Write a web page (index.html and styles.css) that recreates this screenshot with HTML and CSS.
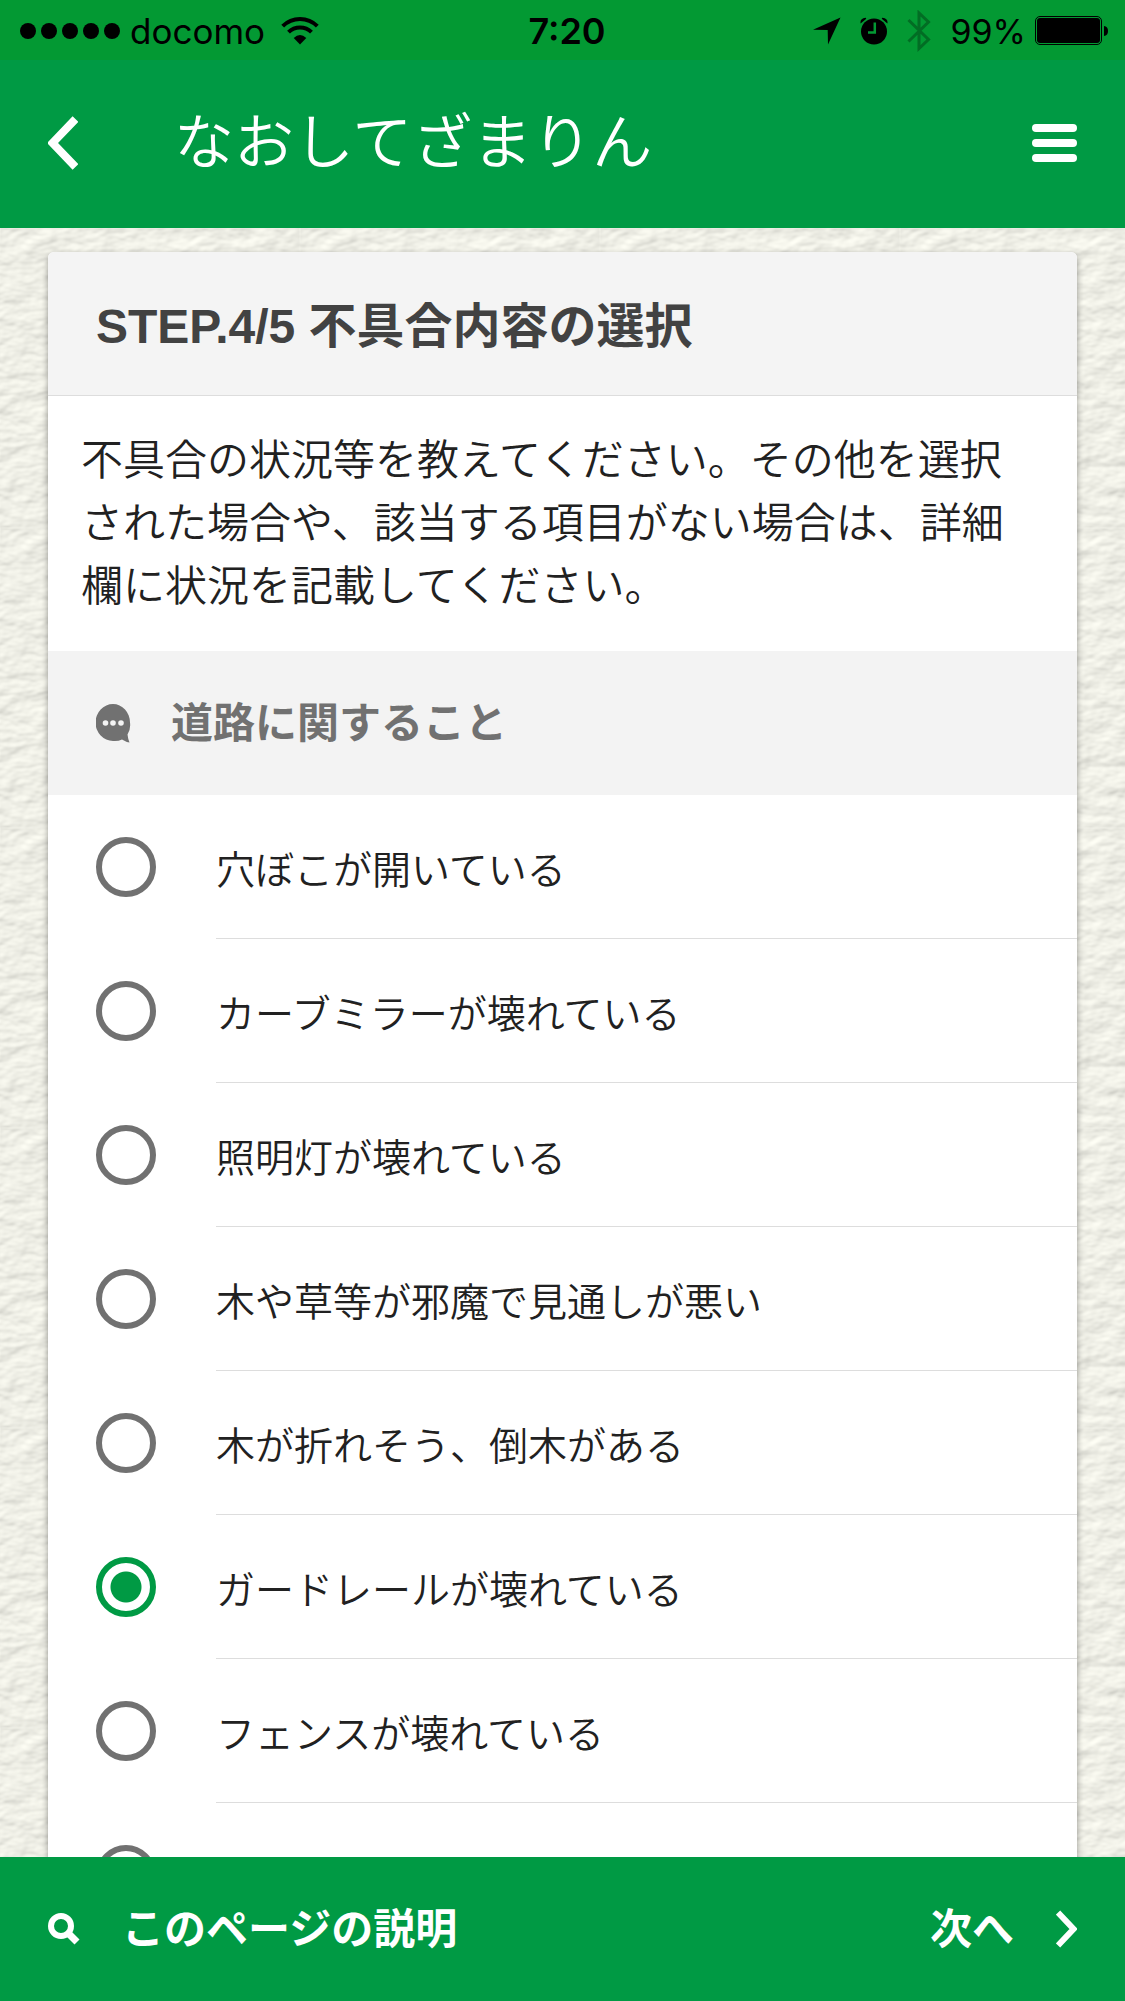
FILE: index.html
```
<!DOCTYPE html>
<html lang="ja">
<head>
    <meta charset="UTF-8">
    <meta name="viewport" content="width=device-width, initial-scale=1.0">
    <title>なおしてざまりん</title>
    <link rel="stylesheet" href="styles.css">
</head>
<body>

    <!-- Status Bar -->
    <div class="status-bar">
        <div class="status-left">
            <svg class="signal" width="100" height="16" viewBox="0 0 100 16">
                <circle cx="8" cy="8" r="8"/>
                <circle cx="29" cy="8" r="8"/>
                <circle cx="50" cy="8" r="8"/>
                <circle cx="71" cy="8" r="8"/>
                <circle cx="92" cy="8" r="8"/>
            </svg>
            <span class="carrier">docomo</span>
            <svg class="wifi" width="38" height="28" viewBox="0 0 38 28">
                <path d="M1.700 9.200A24.500 24.500 0 0 1 36.300 9.200M7.500 15.200A16.300 16.300 0 0 1 30.500 15.200" fill="none" stroke="#000" stroke-width="4"/>
                <path d="M19 27.500L12.700 21Q19 15 25.300 21Z"/>
            </svg>
        </div>
        <div class="clock">7:20</div>
        <div class="status-right">
            <svg width="28" height="28" viewBox="0 0 28 28">
                <path d="M27.500 0.500L0 12.700L14.700 13L15 27.500Z"/>
            </svg>
            <svg width="28" height="28" viewBox="0 0 28 28">
                <circle cx="14" cy="14.500" r="13"/>
                <path d="M0.600 6.500Q-0.300 1.500 5.500 0.800Q6.500 1.200 6 2ZM27.400 6.500Q28.300 1.500 22.500 0.800Q21.500 1.200 22 2Z"/>
                <path d="M14.800 5.500V15.500H8" fill="none" stroke="#039933" stroke-width="2.500"/>
            </svg>
            <svg width="24" height="42" viewBox="0 0 24 42">
                <path d="M1.500 10L21.500 29.500L12 38.500V3L21.500 12L1.500 31.500" fill="none" stroke="#026d24" stroke-width="3"/>
            </svg>
            <span class="percent">99%</span>
            <svg class="battery" width="74" height="30" viewBox="0 0 74 30">
                <rect x="0.500" y="0.500" width="66" height="28" rx="4.500" fill="none" stroke="#000"/>
                <rect x="2" y="2" width="63" height="25" rx="3"/>
                <path d="M69 10Q73 10.500 73 15Q73 19.500 69 20Z"/>
            </svg>
        </div>
    </div>

    <!-- Title Bar -->
    <header class="title-bar">
        <button class="icon-button" aria-label="戻る">
            <svg width="30" height="54" viewBox="0 0 30 54">
                <path d="M27.500 3L4.500 27L27.500 51" fill="none" stroke="#fff" stroke-width="8"/>
            </svg>
        </button>
        <h1 class="app-title">なおしてざまりん</h1>
        <button class="icon-button" aria-label="メニュー">
            <svg width="45" height="38" viewBox="0 0 45 38">
                <rect width="45" height="8" rx="4" fill="#fff"/>
                <rect y="15" width="45" height="8" rx="4" fill="#fff"/>
                <rect y="30" width="45" height="8" rx="4" fill="#fff"/>
            </svg>
        </button>
    </header>

    <!-- Main Content -->
    <main class="main-content">
        <form class="card">
            <h2 class="card-title">STEP.4/5 不具合内容の選択</h2>
            <p class="card-text">不具合の状況等を教えてください。その他を選択された場合や、該当する項目がない場合は、詳細欄に状況を記載してください。</p>
            <h3 class="group-title">
                <svg width="35" height="39" viewBox="0 0 35 39">
                    <path d="M17 0A17 18 0 0 0 17 37Q22 37.500 26 35.500Q30 38 33.500 38.500Q32 35 31.500 30.500A18 18 0 0 0 34 18.500A17 18.500 0 0 0 17 0Z" fill="#717171"/>
                    <circle cx="9.500" cy="19" r="2.800" fill="#f3f3f3"/>
                    <circle cx="17" cy="19" r="2.800" fill="#f3f3f3"/>
                    <circle cx="25" cy="19" r="2.800" fill="#f3f3f3"/>
                </svg>
                道路に関すること
            </h3>
            <ul class="options">
                <li><label class="option"><input type="radio" name="trouble"><span>穴ぼこが開いている</span></label></li>
                <li><label class="option"><input type="radio" name="trouble"><span>カーブミラーが壊れている</span></label></li>
                <li><label class="option"><input type="radio" name="trouble"><span>照明灯が壊れている</span></label></li>
                <li><label class="option"><input type="radio" name="trouble"><span>木や草等が邪魔で見通しが悪い</span></label></li>
                <li><label class="option"><input type="radio" name="trouble"><span>木が折れそう、倒木がある</span></label></li>
                <li><label class="option"><input type="radio" name="trouble" checked><span>ガードレールが壊れている</span></label></li>
                <li><label class="option"><input type="radio" name="trouble"><span>フェンスが壊れている</span></label></li>
                <li><label class="option"><input type="radio" name="trouble" aria-label="その他"><span></span></label></li>
            </ul>
        </form>
    </main>

    <!-- Footer -->
    <footer class="bottom-bar">
        <button class="bar-button help">
            <svg width="32" height="32" viewBox="0 0 32 32">
                <circle cx="13" cy="13" r="10" fill="none" stroke="#fff" stroke-width="6"/>
                <path d="M20 20L29 29" stroke="#fff" stroke-width="7"/>
            </svg>
            このページの説明
        </button>
        <button class="bar-button next">
            次へ
            <svg width="21" height="38" viewBox="0 0 21 38">
                <path d="M2 2.500L17.500 19L2 35.500" fill="none" stroke="#fff" stroke-width="6"/>
            </svg>
        </button>
    </footer>

</body>
</html>
```
FILE: styles.css
```
/* Global Reset */
* {
    margin: 0;
    padding: 0;
    box-sizing: border-box;
}

body {
    height: 100vh;
    display: flex;
    flex-direction: column;
    overflow: hidden;
    color: #212121;
    font-family: "Liberation Sans", "Noto Sans CJK JP", sans-serif;
}

button {
    border: none;
    background: none;
    color: inherit;
    font-family: inherit;
    cursor: pointer;
}

svg {
    display: block;
    flex: none;
}

/* Status Bar */
.status-bar {
    height: 60px;
    padding: 2px 16px 0 20px;
    display: grid;
    grid-template-columns: 1fr auto 1fr;
    align-items: center;
    background: #039933;
    color: #000;
    font-family: Inter, "Noto Sans CJK JP", sans-serif;
    font-size: 35px;
}

.status-left,
.status-right {
    display: flex;
    align-items: center;
}

.status-left {
    gap: 10px;
}

.wifi {
    margin-left: 6px;
}

.clock {
    padding-left: 5px;
    font-size: 36px;
    font-weight: 600;
}

.status-right {
    justify-content: flex-end;
    gap: 19px;
}

.percent {
    font-size: 34px;
}

.battery {
    margin-left: -10px;
}

/* Title Bar */
.title-bar {
    height: 168px;
    padding: 0 48px;
    display: flex;
    align-items: center;
    background: #009a44;
    color: #fff;
    flex: none;
}

.icon-button {
    padding: 20px 0 23px;
}

.app-title {
    flex: 1;
    margin-left: 96px;
    font-size: 60px;
    font-weight: 350;
    line-height: 72px;
}

/* Main Content Area, paper texture behind the card */
.main-content {
    flex: 1;
    min-height: 0;
    padding: 24px 48px;
    overflow-y: auto;
    scrollbar-width: none;
    background-color: #ecebe4;
    background-image: url("data:image/svg+xml,%3Csvg xmlns='http://www.w3.org/2000/svg' width='300' height='300'%3E%3Cfilter id='p' x='0' y='0' width='100%25' height='100%25' color-interpolation-filters='sRGB'%3E%3CfeTurbulence type='fractalNoise' baseFrequency='0.035 0.06' numOctaves='3' seed='4' stitchTiles='stitch'/%3E%3CfeDiffuseLighting surfaceScale='1.3' diffuseConstant='1.05' lighting-color='%23f5f5ec'%3E%3CfeDistantLight azimuth='240' elevation='68'/%3E%3C/feDiffuseLighting%3E%3C/filter%3E%3Crect width='300' height='300' filter='url(%23p)'/%3E%3C/svg%3E");
}

/* Card */
.card {
    background: #fff;
    border-radius: 6px;
    box-shadow: 0 3px 6px rgba(0, 0, 0, 0.4);
}

.card-title {
    padding: 39px 48px 32px;
    background: #f4f4f4;
    border-bottom: 1px solid #ddd;
    border-radius: 6px 6px 0 0;
    color: #424242;
    font-size: 48px;
    line-height: 72px;
}

.card-text {
    padding: 33px 48px 33px 33px;
    font-size: 42px;
    font-weight: 350;
    line-height: 63px;
}

.group-title {
    height: 144px;
    padding: 0 48px;
    display: flex;
    align-items: center;
    gap: 40px;
    background: #f3f3f3;
    color: #717171;
    font-size: 42px;
    line-height: 63px;
}

/* Radio List */
.options {
    list-style: none;
}

.option {
    height: 144px;
    padding-left: 48px;
    display: flex;
    align-items: center;
    gap: 60px;
    font-size: 39px;
    font-weight: 350;
    cursor: pointer;
}

.option span {
    flex: 1;
    height: 144px;
    padding-top: 44px;
    border-bottom: 1px solid #ddd;
    line-height: 63px;
}

.option input {
    appearance: none;
    flex: none;
    width: 60px;
    height: 60px;
    border: 6px solid #717171;
    border-radius: 50%;
    cursor: pointer;
}

.option input:checked {
    border-color: #009a44;
    background: radial-gradient(circle, #009a44 15px, transparent 16px);
}

/* Footer */
.bottom-bar {
    height: 144px;
    padding: 0 48px;
    display: flex;
    align-items: center;
    justify-content: space-between;
    background: #009a44;
    color: #fff;
    flex: none;
}

.bar-button {
    display: flex;
    align-items: center;
    gap: 42px;
    font-size: 42px;
    font-weight: bold;
    line-height: 63px;
}
```
